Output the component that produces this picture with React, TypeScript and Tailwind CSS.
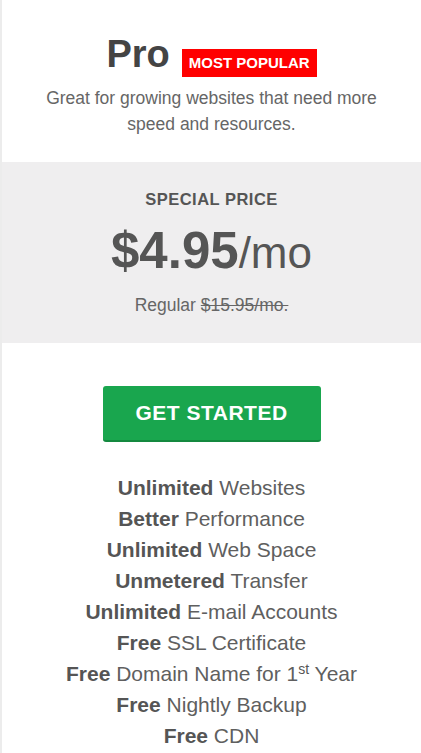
const features: [string, string, boolean?][] = [
  ["Unlimited", "Websites"],
  ["Better", "Performance"],
  ["Unlimited", "Web Space"],
  ["Unmetered", "Transfer"],
  ["Unlimited", "E-mail Accounts"],
  ["Free", "SSL Certificate"],
  ["Free", "Domain Name for 1", true],
  ["Free", "Nightly Backup"],
  ["Free", "CDN"],
];

export default function App() {
  return (
    <div
      className="min-h-[753px] bg-white border-l-2 border-[#ececec] text-center text-[#555]"
      style={{ fontFamily: '"Liberation Sans", Arial, sans-serif' }}
    >
      <div className="pt-[32px] px-5">
        <div className="flex items-start justify-center gap-3">
          <h2 className="text-[38px] font-bold leading-[44px] text-[#444]">Pro</h2>
          <span className="mt-[17px] bg-[#ff0000] px-[7px] py-[5px] text-[15px] font-bold leading-[18px] text-white">
            MOST POPULAR
          </span>
        </div>
        <p className="mx-auto mt-[8px] max-w-[360px] text-[17.5px] leading-[26px] text-[#666]">
          Great for growing websites that need more speed and resources.
        </p>
      </div>

      <div className="mt-[25px] bg-[#efeeef] pt-[27px] pb-[26px]">
        <div className="text-[16.5px] font-bold leading-5 tracking-[0.5px] text-[#555]">SPECIAL PRICE</div>
        <div className="mt-[12px] leading-[60px] text-[#555]">
          <span className="text-[51px] font-bold">$4.95</span>
          <span className="text-[44px]">/mo</span>
        </div>
        <div className="text-[17.5px] leading-6 text-[#666]">
          Regular <span className="line-through">$15.95/mo.</span>
        </div>
      </div>

      <div className="flex justify-center pt-[43px]">
        <button className="h-[56px] w-[218px] rounded-[3px] border-b-2 border-[#14893f] bg-[#19a64e] text-[21px] font-bold tracking-[0.5px] text-white">
          GET STARTED
        </button>
      </div>

      <ul className="mt-[30px] text-[21px] leading-[31px] text-[#555]">
        {features.map(([b, r, sup], i) => (
          <li key={i}>
            <b className="text-[#555]">{b}</b> <span className="text-[#5f5f5f]">{r}</span>
            {sup && (
              <>
                <sup className="text-[14px]">st</sup>
                <span className="text-[#5f5f5f]"> Year</span>
              </>
            )}
          </li>
        ))}
      </ul>
    </div>
  );
}
